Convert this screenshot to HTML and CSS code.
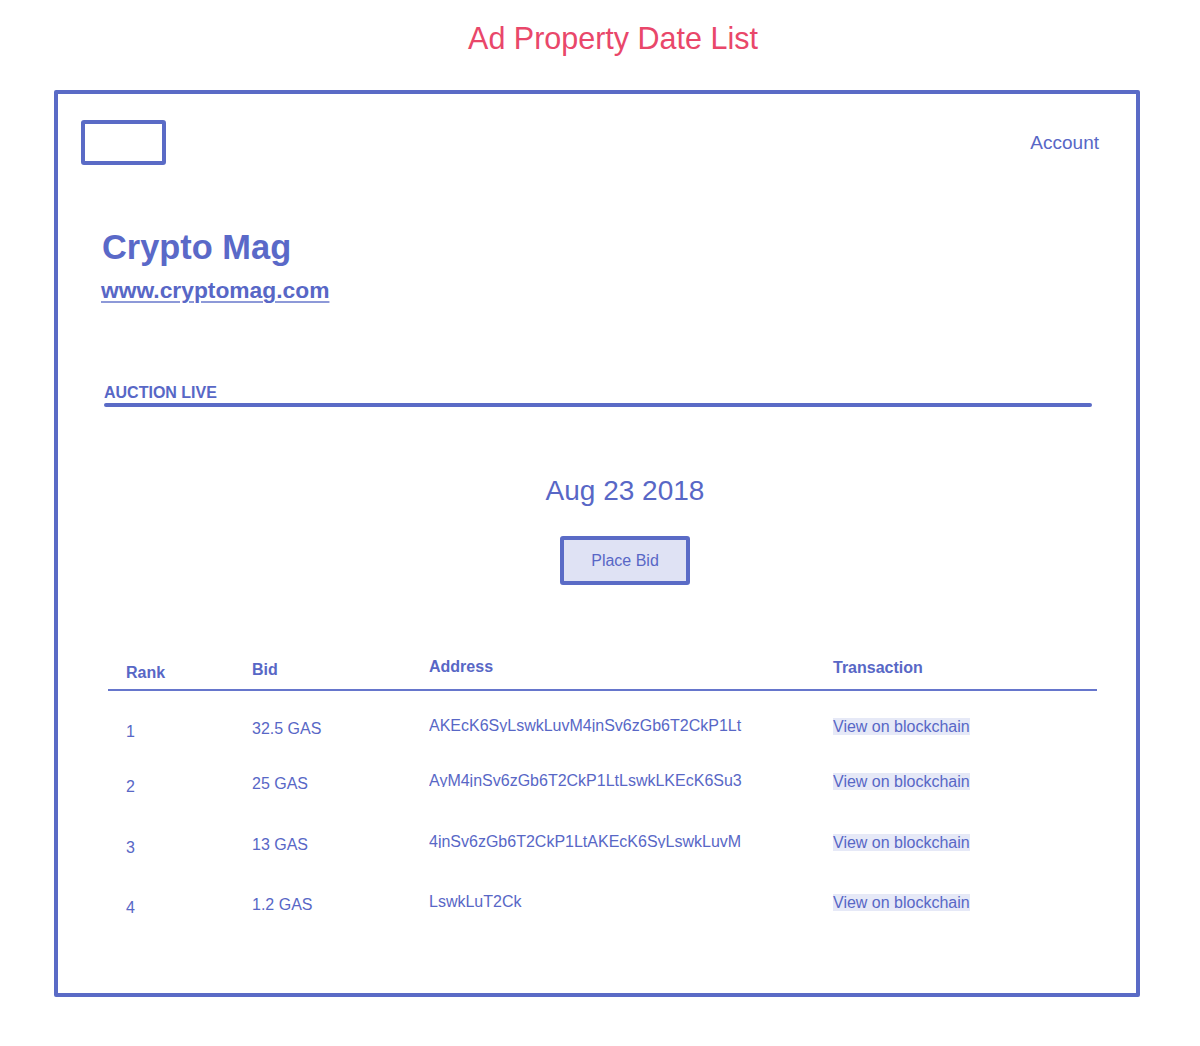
FILE: index.html
```html
<!DOCTYPE html>
<html lang="en">
<head>
<meta charset="utf-8">
<title>Ad Property Date List</title>
<link rel="stylesheet" href="styles.css">
</head>
<body>
  <h1 class="page-title">Ad Property Date List</h1>
  <div class="frame">
    <header class="topbar">
      <div class="logo"></div>
      <a class="account" href="#">Account</a>
    </header>
    <section class="site">
      <h2 class="site-name">Crypto Mag</h2>
      <a class="site-url" href="#">www.cryptomag.com</a>
    </section>
    <section class="auction">
      <h3 class="auction-label">AUCTION LIVE</h3>
      <div class="rule"></div>
    </section>
    <section class="center-block">
      <div class="date">Aug 23 2018</div>
      <button class="bid-btn" type="button">Place Bid</button>
    </section>
    <div class="bids">
      <div class="row head">
        <div class="cell c-rank">Rank</div>
        <div class="cell c-bid">Bid</div>
        <div class="cell c-addr">Address</div>
        <div class="cell c-tx">Transaction</div>
      </div>
      <div class="row">
        <div class="cell c-rank">1</div>
        <div class="cell c-bid">32.5 GAS</div>
        <div class="cell c-addr"><span class="addr">AKEcK6SyLswkLuvM4jnSv6zGb6T2CkP1Lt</span></div>
        <div class="cell c-tx"><a class="tx-link" href="#">View on blockchain</a></div>
      </div>
      <div class="row">
        <div class="cell c-rank">2</div>
        <div class="cell c-bid">25 GAS</div>
        <div class="cell c-addr"><span class="addr">AyM4jnSv6zGb6T2CkP1LtLswkLKEcK6Su3</span></div>
        <div class="cell c-tx"><a class="tx-link" href="#">View on blockchain</a></div>
      </div>
      <div class="row">
        <div class="cell c-rank">3</div>
        <div class="cell c-bid">13 GAS</div>
        <div class="cell c-addr"><span class="addr">4jnSv6zGb6T2CkP1LtAKEcK6SyLswkLuvM</span></div>
        <div class="cell c-tx"><a class="tx-link" href="#">View on blockchain</a></div>
      </div>
      <div class="row">
        <div class="cell c-rank">4</div>
        <div class="cell c-bid">1.2 GAS</div>
        <div class="cell c-addr"><span class="addr">LswkLuT2Ck</span></div>
        <div class="cell c-tx"><a class="tx-link" href="#">View on blockchain</a></div>
      </div>
    </div>
  </div>
</body>
</html>
```

FILE: styles.css
```css
* { box-sizing: border-box; }

html, body {
  margin: 0;
  padding: 0;
  background: #ffffff;
}

body {
  font-family: "Liberation Sans", Arial, Helvetica, sans-serif;
  color: #5867c6;
  width: 1200px;
}

a { color: inherit; text-decoration: none; }

.page-title {
  margin: 0;
  padding: 20px 0 0 26px;
  font-size: 30.5px;
  line-height: 36px;
  font-weight: 400;
  text-align: center;
  color: #e9476a;
}

.frame {
  margin: 34px 0 0 54px;
  width: 1086px;
  height: 907px;
  border: 4px solid #5a6bc6;
  border-radius: 2px;
}

.topbar {
  display: flex;
  align-items: center;
  justify-content: space-between;
  padding: 26px 37px 0 23px;
}

.logo {
  width: 85px;
  height: 45px;
  border: 4px solid #5a6bc6;
  border-radius: 3px;
}

.account {
  font-size: 19px;
  line-height: 22px;
  color: #5867c6;
}

.site {
  margin: 62px 0 0 44px;
}

.site-name {
  margin: 0;
  font-size: 34.4px;
  line-height: 40px;
  font-weight: 700;
  color: #5a69c8;
}

.site-url {
  display: inline-block;
  margin-top: 10px;
  margin-left: -1px;
  font-size: 22.8px;
  line-height: 26px;
  font-weight: 700;
  text-decoration: underline;
  text-decoration-thickness: 2px;
  text-underline-offset: 3px;
  text-decoration-color: #8d99d8;
}

.auction {
  margin: 80px 0 0 46px;
  width: 988px;
}

.auction-label {
  margin: 0;
  font-size: 16px;
  line-height: 20px;
  font-weight: 700;
}

.rule {
  height: 4px;
  background: #5a6bc6;
  border-radius: 2px;
}

.center-block {
  padding-left: 56px;
  text-align: center;
}

.date {
  margin-top: 68px;
  font-size: 28px;
  line-height: 32px;
}

.bid-btn {
  margin-top: 29px;
  width: 130px;
  height: 49px;
  border: 4px solid #5a6bc6;
  border-radius: 3px;
  background: #dfe2f4;
  color: #5867c6;
  font-family: "Liberation Sans", Arial, Helvetica, sans-serif;
  font-size: 16px;
  padding: 0;
}

.bids {
  margin: 72px 0 0 50px;
  width: 989px;
}

.row {
  display: grid;
  grid-template-columns: 144px 177px 404px 1fr;
  height: 58px;
  padding-top: 25px;
  font-size: 16px;
  line-height: 20px;
}

.row:nth-child(2) { height: 55px; }
.row:nth-child(3) { height: 61px; }
.row:nth-child(4) { height: 60px; }

.row.head {
  height: 34px;
  padding-top: 0;
  font-weight: 700;
  border-bottom: 2px solid #6676cc;
}

.cell { white-space: nowrap; }

.c-rank { padding-left: 18px; padding-top: 6px; }
.c-bid { padding-top: 3px; }
.c-addr { padding-top: 0; }
.c-tx { padding-top: 1px; }

.addr {
  display: block;
  height: 16px;
  overflow: hidden;
}

.tx-link {
  background: #e6e9f7;
}
```
